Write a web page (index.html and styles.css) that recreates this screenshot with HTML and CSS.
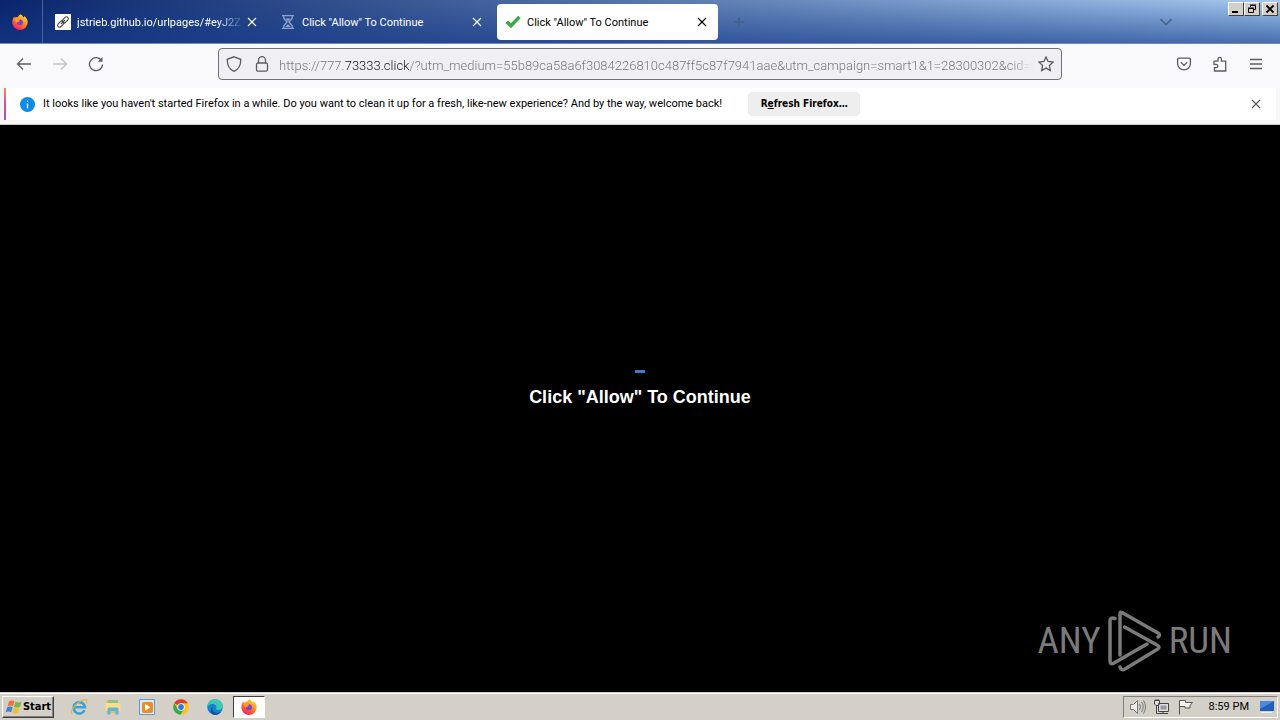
FILE: index.html
```html
<!DOCTYPE html>
<html lang="en">
<head>
<meta charset="utf-8">
<title>Click "Allow" To Continue</title>
<link rel="stylesheet" href="styles.css">
</head>
<body>
<svg width="0" height="0" class="defs" aria-hidden="true">
  <defs>
    <linearGradient id="fxBody" x1="0.8" y1="0" x2="0.2" y2="1">
      <stop offset="0" stop-color="#ffe23a"/><stop offset="0.45" stop-color="#ff8a1e"/><stop offset="0.8" stop-color="#ff3b47"/><stop offset="1" stop-color="#e31587"/>
    </linearGradient>
    <symbol id="firefox" viewBox="0 0 16 16">
      <path d="M8.6 0.3c1.7 1 2.4 2.2 2.7 3.1.8-.2.9-1 .8-1.5 2.3 1.4 3.6 3.8 3.6 6.3A7.7 7.7 0 0 1 8 15.9 7.7 7.7 0 0 1 .3 8.2c0-2.6 1-4.6 2-5.800l.5 1.500C3.600 3.200 4.800 3 5.600 3.300 6.200 2 7.200 1 8.600.3z" fill="url(#fxBody)"/>
      <path d="M5.200 6.300c1.200-1.400 3.900-1.600 5.200.1 1.300 1.800.5 4.800-2.200 4.900-2.200 0-3.600-1.400-3.500-3.400 1 .5 2 .5 3-.4-.8-.3-1.600-.9-2.500-1.200z" fill="#7b3fd6"/>
      <path d="M2.800 4c1-.6 2.300-.6 3.300 0 .1.800 1.200 1.300 2.300 1.400-.2 1-1.500 1.200-2.200 1.700-.6.500-.8 1.400-1.500 1.600C3.300 8 2.500 6 2.800 4z" fill="#ff9a22"/>
    </symbol>
    <symbol id="close" viewBox="0 0 10 10"><path d="M1 1l8 8M9 1L1 9" fill="none" stroke="currentColor" stroke-width="1.1"/></symbol>
  </defs>
</svg>

<header class="tabstrip">
  <button class="view" aria-label="Firefox View"><svg width="16" height="16"><use href="#firefox"/></svg></button>
  <nav class="tabs">
    <div class="tab">
      <svg class="favicon" viewBox="0 0 16 16"><rect width="16" height="16" fill="#fff"/><g fill="none" stroke="#444" stroke-width="1.100"><rect x="6.800" y="4" width="7" height="3.800" rx="1.900" transform="rotate(-45 10.300 5.900)"/><rect x="2.200" y="8.200" width="7" height="3.800" rx="1.900" transform="rotate(-45 5.700 10.100)"/><path d="M6 10l4-4"/></g></svg>
      <span class="tab-title fade">jstrieb.github.io/urlpages/#eyJ2Z</span>
      <button class="tab-close" aria-label="Close tab"><svg width="10" height="10"><use href="#close"/></svg></button>
    </div>
    <div class="tab">
      <svg class="favicon" viewBox="0 0 16 16" fill="none" stroke="#8fa3d0" stroke-width="1.300"><path d="M2 1.600h12M2 14.400h12M3.800 2v2.200L7 8l-3.200 3.800V14M12.200 2v2.200L9 8l3.200 3.800V14"/><path d="M5.500 4.500h5L8 7.500zM5 13l3-3 3 3z" fill="#8fa3d0" stroke="none"/></svg>
      <span class="tab-title">Click "Allow" To Continue</span>
      <button class="tab-close" aria-label="Close tab"><svg width="10" height="10"><use href="#close"/></svg></button>
    </div>
    <div class="tab active">
      <svg class="favicon" viewBox="0 0 16 16"><path d="M.4 9l2.700-2.500 2.800 2.700L13.200 1.700l2.500 2.200L6 14.200z" fill="#3fa648"/></svg>
      <span class="tab-title">Click "Allow" To Continue</span>
      <button class="tab-close" aria-label="Close tab"><svg width="10" height="10"><use href="#close"/></svg></button>
    </div>
    <button class="new-tab" aria-label="New tab"><svg width="12" height="12" viewBox="0 0 12 12"><path d="M6 1v10M1 6h10" stroke="#4a5c86" stroke-width="1.500"/></svg></button>
  </nav>
  <button class="all-tabs" aria-label="List all tabs"><svg width="14" height="8" viewBox="0 0 14 8"><path d="M1.500 1.200L7 6.500l5.500-5.300" fill="none" stroke="#4b6790" stroke-width="1.700"/></svg></button>
  <div class="window-controls">
    <button aria-label="Minimize"><svg width="12" height="10" viewBox="0 0 12 10"><path d="M2 7h6v2H2z"/></svg></button>
    <button aria-label="Restore"><svg width="12" height="10" viewBox="0 0 12 10" fill="none" stroke="#000"><path d="M4.500 3V1.500h5v4H8M4 1h6" /><path d="M2.500 4.500h5v4h-5zM2 4h6"/></svg></button>
    <button class="gap" aria-label="Close"><svg width="12" height="10" viewBox="0 0 12 10"><path d="M2.500 1.500l7 7M9.500 1.500l-7 7" stroke="#000" stroke-width="1.800"/></svg></button>
  </div>
</header>

<div class="toolbar">
  <div class="nav-buttons">
    <button aria-label="Back"><svg width="16" height="16" viewBox="0 0 16 16"><path d="M15 8H1.500M7 2.500L1.500 8 7 13.500"/></svg></button>
    <button aria-label="Forward" disabled><svg width="16" height="16" viewBox="0 0 16 16"><path d="M1 8h13.500M9 2.500L14.500 8 9 13.500"/></svg></button>
    <button aria-label="Reload"><svg width="16" height="16" viewBox="0 0 16 16"><path d="M13.700 5A6.500 6.500 0 1 0 14.500 8.500"/><path d="M14.500 1v4.800H9.800z" fill="#5b5b66" stroke="none"/></svg></button>
  </div>
  <div class="urlbar">
    <svg width="16" height="16" viewBox="0 0 16 16"><path d="M8 .8l6.700 2.500c.2 4.700-1.500 9.600-6.700 12C2.800 12.900 1.100 8 1.300 3.300z"/></svg>
    <svg width="16" height="16" viewBox="0 0 16 16"><rect x="2.500" y="7" width="11" height="8.200" rx="1.500"/><path d="M4.500 7V4.200a3.500 3.500 0 0 1 7 0V7"/></svg>
    <input type="text" aria-label="Address" value="https://777.73333.click/?utm_medium=55b89ca58a6f3084226810c487ff5c87f7941aae&amp;utm_campaign=smart1&amp;1=28300302&amp;cid=9">
    <button class="star" aria-label="Bookmark this page"><svg width="16" height="16" viewBox="0 0 16 16"><path d="M8 1l2.100 4.500 4.900.6-3.600 3.400.9 5L8 12.100l-4.300 2.400.9-5L1 6.100l4.900-.6z"/></svg></button>
  </div>
  <div class="tool-buttons">
    <button aria-label="Save to Pocket"><svg width="16" height="16" viewBox="0 0 16 16"><path d="M2.800 2.200h10.400a1.200 1.200 0 0 1 1.200 1.200V7.500a6.400 6.400 0 0 1-12.800 0V3.400a1.200 1.200 0 0 1 1.200-1.200zM4.800 6.300L8 9.400l3.200-3.100"/></svg></button>
    <button aria-label="Extensions"><svg width="16" height="16" viewBox="0 0 16 16"><path d="M2 5.200h4V3a1.700 1.700 0 0 1 3.400 0v2.200h4.300V15H2.500v-3.300h1.700a1.600 1.600 0 0 0 0-3.300H2z"/></svg></button>
    <button aria-label="Menu"><svg width="16" height="16" viewBox="0 0 16 16"><path d="M2 3.500h12M2 8h12M2 12.500h12"/></svg></button>
  </div>
</div>

<div class="notice-wrap">
  <div class="notice">
    <svg width="15" height="15" viewBox="0 0 15 15"><circle cx="7.500" cy="7.500" r="7.500" fill="#0a8ce8"/><path d="M7.500 6.500v5M7.500 3.500v1.500" stroke="#fff" stroke-width="1.300"/></svg>
    <span class="notice-text">It looks like you haven't started Firefox in a while. Do you want to clean it up for a fresh, like-new experience? And by the way, welcome back!</span>
    <button class="refresh">R<u>e</u>fresh Firefox…</button>
    <button class="dismiss" aria-label="Dismiss"><svg width="10" height="10"><use href="#close"/></svg></button>
  </div>
</div>

<main class="page">
  <div class="prompt">
    <div class="dash"></div>
    <h1>Click "Allow" To Continue</h1>
  </div>
  <div class="watermark">
    <span>ANY</span>
    <svg width="56" height="62" viewBox="0 0 56 62" fill="none" stroke="#7a7a7a" stroke-width="3.500" stroke-linejoin="round" stroke-linecap="round"><path d="M13 45V3.500Q13 1.500 15 2.500L51 23q3 2 0 4M17.500 17L50 35q4 2 0 4.500L18 59q-4 2-5-2M8 8.500Q3 7 3 11v40q0 4 4 2l33-19"/></svg>
    <span>RUN</span>
  </div>
</main>

<footer class="taskbar">
  <button class="start">
    <svg width="18" height="16" viewBox="0 0 18 16"><path d="M4 2.500q3-2 5.500-.3L8 7.200q-2.700-1.500-5.500 0z" fill="#ee7136"/><path d="M10.500 2.700q3 1.500 6 0L15 8q-3 1.300-6-.3z" fill="#78b845"/><path d="M2.200 8.300q2.800-1.600 5.500 0l-1.500 5q-2.700-1.600-5.600 0z" fill="#3c87d0"/><path d="M8.700 8.800q3 1.500 6 .2l-1.500 5q-3 1.500-6-.2z" fill="#f4bd32"/></svg>
    Start
  </button>
  <nav class="quick">
    <button aria-label="Internet Explorer"><svg width="18" height="18" viewBox="0 0 18 18" fill="none"><path d="M14.500 12.200A5.700 5.700 0 1 1 15 9.300H4" stroke="#36a3df" stroke-width="2.600"/><path d="M2 16C-1 13 8 3 14.500 1.500 17 1 17.500 3 16 5" stroke="#e5b83a" stroke-width="1.200"/></svg></button>
    <button aria-label="Explorer"><svg width="18" height="18" viewBox="0 0 18 18"><path d="M2 3h5l1 2h7v10H2z" fill="#e7c25a"/><path d="M4 2h10v8H4z" fill="#8bc58c"/><path d="M1.500 5h15v8h-15z" fill="#f8df8b"/><path d="M3.500 16.500V11q0-1.500 1.500-1.500h8q1.500 0 1.500 1.500v5.500h-3V13h-5v3.500z" fill="#63b3df"/></svg></button>
    <button aria-label="Media Player"><svg width="18" height="18" viewBox="0 0 18 18"><path d="M1.500 1.500h15v15h-15z" fill="#d7eafa" stroke="#5c9bd0"/><rect x="4" y="4" width="11" height="11" rx="2" fill="#f18a1b"/><path d="M7 5.800v7l5.500-3.500z" fill="#fff"/></svg></button>
    <button aria-label="Chrome"><svg width="18" height="18" viewBox="0 0 18 18"><circle cx="9" cy="9" r="7.800" fill="#f9c51d"/><path d="M9 9L2.200 5.200A7.800 7.800 0 0 1 15.800 5.200H9z" fill="#e03c31"/><path d="M9 9L5.800 11 2.200 5.200A7.800 7.800 0 0 0 8.500 16.800L12 11z" fill="#35a853"/><circle cx="9" cy="9" r="3.700" fill="#fff"/><circle cx="9" cy="9" r="2.900" fill="#3579dc"/></svg></button>
    <button aria-label="Edge"><svg width="18" height="18" viewBox="0 0 18 18"><circle cx="9" cy="9" r="7.800" fill="#1683cf"/><path d="M1.200 9C1.500 3.500 5 1.200 9 1.200c5 0 7.800 3.500 7.800 6.800 0 2.800-2.300 4-4.500 4-2 0-2.700-1-1.900-2C11.300 7.500 8 5.500 5 6.300 3 6.800 1.700 8 1.200 9z" fill="#3ccbb2"/><path d="M7 8.500c-2 3 .5 6.500 4.500 6.300 2 0 3.700-1 4.600-2.300-2 4-6 5-9.100 4.100C4 15 4 10.500 7 8.500z" fill="#154f9f"/></svg></button>
    <button class="pressed" aria-label="Firefox"><svg width="16" height="16"><use href="#firefox"/></svg></button>
  </nav>
  <div class="tray">
    <svg width="18" height="18" viewBox="0 0 18 18" fill="#eee" stroke="#777"><path d="M1.500 6.500h3l4-4v13l-4-4h-3z"/><path d="M10.500 6q2 3 0 6M12.500 4q3.500 5 0 10M14.500 2.500q4 6.500 0 13" fill="none"/></svg>
    <svg width="18" height="18" viewBox="0 0 18 18" fill="#ddd" stroke="#444"><path d="M5.500 5.500h10v8h-10zM7 15.500h8M3.500 7v8.500H7M10 13.500v2M1.500 2.500h5V6l-1.500 1.500H3L1.500 6zM3 2.500V1M5 2.500V1"/><path d="M7.500 7.500h6v4h-6z" fill="#999" stroke="none"/></svg>
    <svg width="18" height="18" viewBox="0 0 18 18" fill="#f4f4f4" stroke="#555"><path d="M2.500 16.500v-14M2.500 2.500h6v2h7l-2.500 3 0 2.500h-5v-1.500h-5.500z"/></svg>
    <time>8:59 PM</time>
    <svg width="16" height="14" viewBox="0 0 16 14"><path d="M1 1h14v10H1z" fill="#2060b8"/><path d="M1 1h14L1 9z" fill="#4a8be0"/><path d="M2 12.500h11" stroke="#e9edf5"/></svg>
  </div>
</footer>
</body>
</html>
```

FILE: styles.css
```css
* { box-sizing: border-box; }
body {
  margin: 0;
  min-height: 100vh;
  display: flex;
  flex-direction: column;
  background: #000;
  font: 11px/16px Roboto, "Noto Sans", sans-serif;
  color: #000;
}
button {
  display: flex;
  align-items: center;
  justify-content: center;
  padding: 0;
  border: 0;
  background: none;
  font: inherit;
  color: inherit;
}
svg { display: block; flex: none; }
.defs { position: absolute; }

.tabstrip {
  display: flex;
  height: 44px;
  border-bottom: 1px solid #7988ac;
  background:
    linear-gradient(to bottom, transparent, rgba(20, 60, 140, 0.65)),
    linear-gradient(to right, #0a246a, #a6caf0);
}
.view { width: 43px; padding-right: 2px; border-right: 1px solid #4d609a; }
.tabs { display: flex; flex: 1; padding: 4px 0 3px 4px; gap: 4px; }
.tab {
  display: flex;
  align-items: center;
  width: 221px;
  padding: 0 9px 0 8px;
  border-radius: 4px;
  color: #fff;
}
.tab.active { background: #fff; color: #000; }
.favicon { width: 16px; height: 16px; margin-right: 6px; }
.tab-title { flex: 1; min-width: 0; overflow: hidden; padding-top: 2px; white-space: nowrap; }
.tab-title.fade { -webkit-mask-image: linear-gradient(to left, transparent, #000 28px); mask-image: linear-gradient(to left, transparent, #000 28px); }
.tab-close { width: 14px; height: 24px; }
.new-tab { width: 34px; }
.all-tabs { width: 40px; margin-right: 40px; }
.window-controls { display: flex; padding: 2px; }
.window-controls button {
  width: 16px;
  height: 14px;
  background: #d4d0c8;
  border: 1px solid;
  border-color: #fff #404040 #404040 #fff;
}
.window-controls .gap { margin-left: 2px; }

.toolbar {
  display: flex;
  align-items: center;
  height: 44px;
  padding: 0 8px 4px;
  background: #f9f9fb;
}
.toolbar svg { fill: none; stroke: #5b5b66; stroke-width: 1.3; }
.nav-buttons, .tool-buttons { display: flex; flex: 1; gap: 4px; }
.tool-buttons { justify-content: flex-end; }
.nav-buttons button, .tool-buttons button { width: 32px; height: 32px; }
.nav-buttons button:disabled { opacity: 0.35; }
.urlbar {
  display: flex;
  align-items: center;
  flex: 4;
  max-width: 844px;
  height: 32px;
  padding: 0 7px;
  gap: 12px;
  border: 1px solid #6f6f78;
  border-radius: 4px;
  background: #f0f0f4;
}
.urlbar input {
  flex: 1;
  min-width: 0;
  height: 24px;
  margin-left: -3px;
  padding: 2px 0 0;
  border: 0;
  outline: 0;
  font: 300 13px/22px Roboto, "Noto Sans", sans-serif;
  color: transparent;
  background: linear-gradient(to right, #707078 66px, #15141a 66px, #15141a 131px, #707078 131px);
  -webkit-background-clip: text;
  background-clip: text;
  -webkit-mask-image: linear-gradient(to left, transparent 4px, #000 28px);
  mask-image: linear-gradient(to left, transparent 4px, #000 28px);
}
.star { margin-left: -12px; }

.notice-wrap { padding: 0 4px 4px; background: #f6f6f7; border-bottom: 1px solid #ccc; }
.notice {
  display: flex;
  align-items: center;
  height: 32px;
  padding: 0 14px;
  border-left: 2px solid;
  border-image: linear-gradient(#ff8a50, #e0489a 50%, #9059d0) 1;
  background: #fff;
}
.notice-text { margin: 0 26px 0 8px; white-space: nowrap; }
.refresh {
  width: 112px;
  height: 24px;
  border-radius: 4px;
  background: #eee;
  font: bold 10px/16px "DejaVu Sans Condensed", sans-serif;
  white-space: pre;
}
.dismiss { width: 12px; height: 24px; margin-left: auto; color: #555; }

.page {
  flex: 1;
  display: grid;
  place-items: center;
  position: relative;
  background: #000;
}
.prompt { text-align: center; margin-top: -40px; }
.dash { width: 10px; height: 3px; margin: 0 auto 14px; background: #4475d0; }
.prompt h1 { margin: 0; font: bold 18px/20px "Liberation Sans", Arial, sans-serif; color: #fff; }
.watermark {
  position: absolute;
  right: 48px;
  bottom: 20px;
  display: flex;
  align-items: center;
  gap: 6px;
  color: #7a7a7a;
  font: 37px/62px "Liberation Sans Narrow", "Roboto Condensed", sans-serif;
}

.taskbar {
  display: flex;
  align-items: center;
  height: 28px;
  padding: 2px;
  border-top: 1px solid #d4d0c8;
  box-shadow: inset 0 1px #fff;
  background: #d4d0c8;
}
.start {
  width: 52px;
  height: 22px;
  border: 1px solid;
  border-color: #fff #404040 #404040 #fff;
  box-shadow: inset -1px -1px #808080;
  font: bold 11px/16px "DejaVu Sans Condensed", sans-serif;
}
.quick { display: flex; gap: 2px; margin-left: 9px; }
.quick button { width: 32px; height: 22px; }
.quick .pressed { border: 1px solid; border-color: #404040 #fff #fff #404040; background: #fff; }
.tray {
  display: flex;
  align-items: center;
  gap: 6px;
  height: 22px;
  margin-left: auto;
  padding: 0 2px 0 5px;
  border: 1px solid;
  border-color: #808080 #fff #fff #808080;
}
.tray time { margin: 0 4px 0 8px; }
```
